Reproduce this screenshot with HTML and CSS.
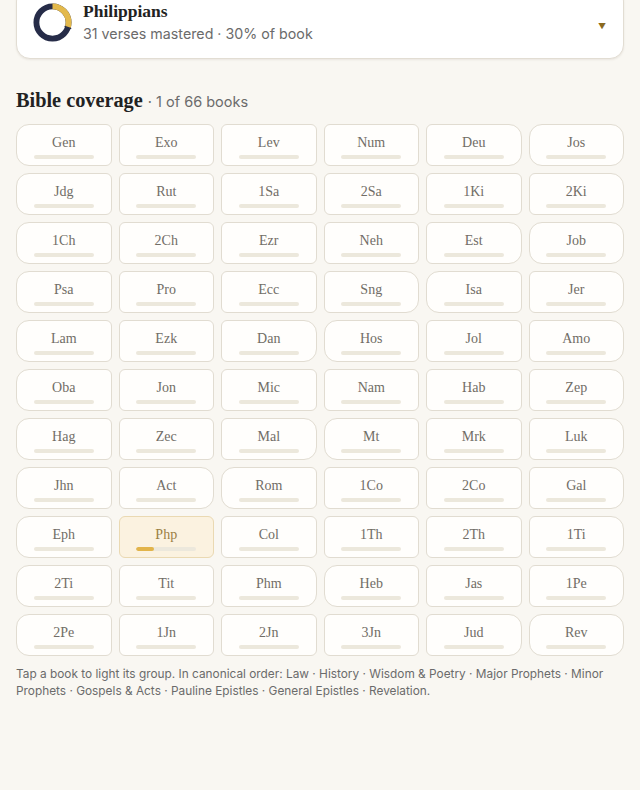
FILE: index.html
```html
<!DOCTYPE html>
<html lang="en">
<head>
<meta charset="utf-8">
<title>Bible coverage</title>
<link rel="stylesheet" href="styles.css">
</head>
<body>
<div class="page">
  <div class="card">
    <div class="card-row">
      <svg class="donut" viewBox="0 0 40 40" width="39" height="39" aria-hidden="true">
        <circle cx="20" cy="20" r="16.5" fill="none" stroke="#262c48" stroke-width="6"/>
        <circle cx="20" cy="20" r="16.5" fill="none" stroke="#e3b94c" stroke-width="6" stroke-dasharray="31.1 72.57" transform="rotate(-90 20 20)"/>
        <line x1="32.4" y1="24.0" x2="39.2" y2="26.2" stroke="#262c48" stroke-width="1.4"/>
      </svg>
      <div class="card-text">
        <div class="card-title">Philippians</div>
        <div class="card-sub">31 verses mastered · 30% of book</div>
      </div>
      <span class="caret">▼</span>
    </div>
  </div>

  <h2 class="heading">Bible coverage <span class="heading-sub">· 1 of 66 books</span></h2>

  <div class="grid">
    <div class="book l"><span class="lbl">Gen</span><span class="bar"></span></div>
    <div class="book"><span class="lbl">Exo</span><span class="bar"></span></div>
    <div class="book"><span class="lbl">Lev</span><span class="bar"></span></div>
    <div class="book"><span class="lbl">Num</span><span class="bar"></span></div>
    <div class="book r"><span class="lbl">Deu</span><span class="bar"></span></div>
    <div class="book l r"><span class="lbl">Jos</span><span class="bar"></span></div>

    <div class="book l"><span class="lbl">Jdg</span><span class="bar"></span></div>
    <div class="book"><span class="lbl">Rut</span><span class="bar"></span></div>
    <div class="book"><span class="lbl">1Sa</span><span class="bar"></span></div>
    <div class="book"><span class="lbl">2Sa</span><span class="bar"></span></div>
    <div class="book"><span class="lbl">1Ki</span><span class="bar"></span></div>
    <div class="book r"><span class="lbl">2Ki</span><span class="bar"></span></div>

    <div class="book l"><span class="lbl">1Ch</span><span class="bar"></span></div>
    <div class="book"><span class="lbl">2Ch</span><span class="bar"></span></div>
    <div class="book"><span class="lbl">Ezr</span><span class="bar"></span></div>
    <div class="book"><span class="lbl">Neh</span><span class="bar"></span></div>
    <div class="book r"><span class="lbl">Est</span><span class="bar"></span></div>
    <div class="book l r"><span class="lbl">Job</span><span class="bar"></span></div>

    <div class="book l"><span class="lbl">Psa</span><span class="bar"></span></div>
    <div class="book"><span class="lbl">Pro</span><span class="bar"></span></div>
    <div class="book"><span class="lbl">Ecc</span><span class="bar"></span></div>
    <div class="book r"><span class="lbl">Sng</span><span class="bar"></span></div>
    <div class="book l"><span class="lbl">Isa</span><span class="bar"></span></div>
    <div class="book r"><span class="lbl">Jer</span><span class="bar"></span></div>

    <div class="book l"><span class="lbl">Lam</span><span class="bar"></span></div>
    <div class="book"><span class="lbl">Ezk</span><span class="bar"></span></div>
    <div class="book r"><span class="lbl">Dan</span><span class="bar"></span></div>
    <div class="book l"><span class="lbl">Hos</span><span class="bar"></span></div>
    <div class="book"><span class="lbl">Jol</span><span class="bar"></span></div>
    <div class="book r"><span class="lbl">Amo</span><span class="bar"></span></div>

    <div class="book l"><span class="lbl">Oba</span><span class="bar"></span></div>
    <div class="book"><span class="lbl">Jon</span><span class="bar"></span></div>
    <div class="book"><span class="lbl">Mic</span><span class="bar"></span></div>
    <div class="book"><span class="lbl">Nam</span><span class="bar"></span></div>
    <div class="book"><span class="lbl">Hab</span><span class="bar"></span></div>
    <div class="book r"><span class="lbl">Zep</span><span class="bar"></span></div>

    <div class="book l"><span class="lbl">Hag</span><span class="bar"></span></div>
    <div class="book"><span class="lbl">Zec</span><span class="bar"></span></div>
    <div class="book r"><span class="lbl">Mal</span><span class="bar"></span></div>
    <div class="book l"><span class="lbl">Mt</span><span class="bar"></span></div>
    <div class="book"><span class="lbl">Mrk</span><span class="bar"></span></div>
    <div class="book r"><span class="lbl">Luk</span><span class="bar"></span></div>

    <div class="book l"><span class="lbl">Jhn</span><span class="bar"></span></div>
    <div class="book r"><span class="lbl">Act</span><span class="bar"></span></div>
    <div class="book l"><span class="lbl">Rom</span><span class="bar"></span></div>
    <div class="book"><span class="lbl">1Co</span><span class="bar"></span></div>
    <div class="book"><span class="lbl">2Co</span><span class="bar"></span></div>
    <div class="book r"><span class="lbl">Gal</span><span class="bar"></span></div>

    <div class="book l"><span class="lbl">Eph</span><span class="bar"></span></div>
    <div class="book active"><span class="lbl">Php</span><span class="bar"><span class="fill" style="width:30%"></span></span></div>
    <div class="book"><span class="lbl">Col</span><span class="bar"></span></div>
    <div class="book"><span class="lbl">1Th</span><span class="bar"></span></div>
    <div class="book"><span class="lbl">2Th</span><span class="bar"></span></div>
    <div class="book r"><span class="lbl">1Ti</span><span class="bar"></span></div>

    <div class="book l"><span class="lbl">2Ti</span><span class="bar"></span></div>
    <div class="book"><span class="lbl">Tit</span><span class="bar"></span></div>
    <div class="book r"><span class="lbl">Phm</span><span class="bar"></span></div>
    <div class="book l"><span class="lbl">Heb</span><span class="bar"></span></div>
    <div class="book"><span class="lbl">Jas</span><span class="bar"></span></div>
    <div class="book r"><span class="lbl">1Pe</span><span class="bar"></span></div>

    <div class="book l"><span class="lbl">2Pe</span><span class="bar"></span></div>
    <div class="book"><span class="lbl">1Jn</span><span class="bar"></span></div>
    <div class="book"><span class="lbl">2Jn</span><span class="bar"></span></div>
    <div class="book"><span class="lbl">3Jn</span><span class="bar"></span></div>
    <div class="book r"><span class="lbl">Jud</span><span class="bar"></span></div>
    <div class="book l r"><span class="lbl">Rev</span><span class="bar"></span></div>
  </div>

  <p class="note">Tap a book to light its group. In canonical order: Law · History · Wisdom &amp; Poetry · Major Prophets · Minor Prophets · Gospels &amp; Acts · Pauline Epistles · General Epistles · Revelation.</p>
</div>
</body>
</html>
```

FILE: styles.css
```css
html, body {
  margin: 0;
  padding: 0;
  background: #f9f7f2;
}

.page {
  padding: 0 16px;
  font-family: Inter, Roboto, "Liberation Sans", sans-serif;
  color: #3a3a3a;
}

.card {
  margin-top: -13px;
  background: #ffffff;
  border: 1px solid #e2ddd3;
  border-radius: 14px;
  padding: 13px 16px 14px 16px;
  box-shadow: 0 1px 2px rgba(120, 110, 90, 0.12);
}

.card-row {
  display: flex;
  align-items: center;
  gap: 11px;
}

.donut {
  flex: none;
  display: block;
}

.card-text {
  flex: 1;
}

.card-title {
  font-family: "Liberation Serif", serif;
  font-weight: 700;
  font-size: 17.5px;
  line-height: 21px;
  color: #222222;
}

.card-sub {
  margin-top: 2px;
  font-size: 14.25px;
  line-height: 20px;
  color: #6b6b6b;
}

.caret {
  flex: none;
  margin-top: 6px;
  margin-right: 1px;
  font-size: 8px;
  color: #8a6a1e;
  line-height: 10px;
}

.heading {
  margin: 28px 0 9px 0;
  font-family: "Liberation Serif", serif;
  font-weight: 700;
  font-size: 20.3px;
  line-height: 26px;
  color: #222222;
}

.heading-sub {
  font-family: Inter, Roboto, "Liberation Sans", sans-serif;
  font-weight: 400;
  font-size: 14.5px;
  color: #6b6b6b;
}

.grid {
  display: grid;
  grid-template-columns: repeat(6, 1fr);
  grid-auto-rows: 42px;
  gap: 7px;
}

.book {
  box-sizing: border-box;
  background: #fffefc;
  border: 1px solid #e1dcd1;
  border-radius: 6px;
  display: flex;
  flex-direction: column;
  align-items: center;
  padding-top: 9px;
}

.book.l {
  border-top-left-radius: 13px;
  border-bottom-left-radius: 13px;
}

.book.r {
  border-top-right-radius: 13px;
  border-bottom-right-radius: 13px;
}

.lbl {
  font-family: "Liberation Serif", serif;
  font-size: 14px;
  line-height: 18px;
  color: #716d66;
}

.bar {
  margin-top: 3px;
  width: 64%;
  height: 4px;
  border-radius: 2px;
  background: #ece8dc;
  overflow: hidden;
  display: block;
}

.fill {
  display: block;
  height: 100%;
  background: #e2b44a;
  border-radius: 2px;
}

.book.active {
  background: #fbf2e0;
  border-color: #ead9b2;
}

.book.active .lbl {
  color: #9a7f43;
}

.note {
  margin: 10px 0 0 0;
  font-size: 11.85px;
  line-height: 17px;
  color: #6b6b6b;
}
```
